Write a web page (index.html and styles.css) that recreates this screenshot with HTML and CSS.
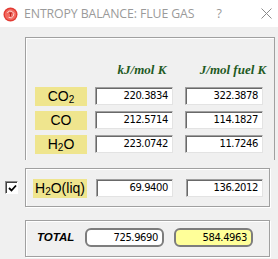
FILE: index.html
```html
<!DOCTYPE html>
<html>
<head>
<meta charset="utf-8">
<link rel="stylesheet" href="styles.css">
</head>
<body>
<div class="titlebar">
  <svg class="appicon" width="15" height="15" viewBox="0 0 15 15">
    <circle cx="7.5" cy="7.5" r="7" fill="#e23b33"/>
    <circle cx="7.5" cy="7.5" r="5.6" fill="#f26a60"/>
    <path d="M4.3 6 A3.4 3.4 0 1 1 5.6 10.3" fill="none" stroke="#fcd6d2" stroke-width="1"/>
    <path d="M6 6 h3 M7.5 6 v3.5" stroke="#b8231c" stroke-width="1"/>
  </svg>
  <span class="title">ENTROPY BALANCE: FLUE GAS</span>
  <span class="help">?</span>
  <svg class="close" width="11" height="11" viewBox="0 0 11 11">
    <path d="M0.5 0.5 L10.5 10.5 M10.5 0.5 L0.5 10.5" stroke="#8a8a8a" stroke-width="1"/>
  </svg>
</div>
<div class="content">
  <div class="group g1">
    <div class="hdr">
      <span class="hcell h1">kJ/mol K</span>
      <span class="hcell h2">J/mol fuel K</span>
    </div>
    <div class="row">
      <span class="lbl">CO<sub>2</sub></span>
      <span class="tb">220.3834</span>
      <span class="tb tb2">322.3878</span>
    </div>
    <div class="row">
      <span class="lbl">CO</span>
      <span class="tb">212.5714</span>
      <span class="tb tb2">114.1827</span>
    </div>
    <div class="row">
      <span class="lbl">H<sub>2</sub>O</span>
      <span class="tb">223.0742</span>
      <span class="tb tb2">11.7246</span>
    </div>
  </div>
  <div class="liqrow">
    <span class="chk">
      <svg width="9" height="9" viewBox="0 0 9 9">
        <path d="M1 4 L3.5 6.5 L8 1.5" fill="none" stroke="#000" stroke-width="1.8"/>
      </svg>
    </span>
    <div class="group g2">
      <span class="lbl lbl2">H<sub>2</sub>O(liq)</span>
      <span class="tb tbl">69.9400</span>
      <span class="tb tbl2">136.2012</span>
    </div>
  </div>
  <div class="group g3">
    <span class="total">TOTAL</span>
    <span class="pill">725.9690</span>
    <span class="pill yellow">584.4963</span>
  </div>
</div>
</body>
</html>
```

FILE: styles.css
```css
html, body {
  margin: 0;
  padding: 0;
}
body {
  width: 278px;
  height: 259px;
  overflow: hidden;
  background: #f0f0f0;
  font-family: "Liberation Sans", Arial, sans-serif;
}
.titlebar {
  height: 27px;
  background: #ffffff;
  display: flex;
  align-items: center;
  box-sizing: border-box;
}
.appicon {
  margin-left: 3px;
  margin-top: 1px;
}
.title {
  margin-left: 6px;
  font-family: "Open Sans", sans-serif;
  font-size: 12.3px;
  color: #9a9a9a;
  letter-spacing: -0.1px;
}
.help {
  margin-left: 22px;
  font-family: "Open Sans", sans-serif;
  font-size: 12.5px;
  color: #9a9a9a;
}
.close {
  margin-left: 39px;
}
.content {
  display: flex;
  flex-direction: column;
}
.group {
  box-sizing: border-box;
  border: 1px solid #a0a0a0;
  box-shadow: inset 1px 1px 0 #ffffff, 1px 1px 0 #ffffff;
}
.g1 {
  margin: 10px 0 0 25px;
  width: 250px;
  height: 123px;
  border-bottom: none;
  padding-left: 9px;
  box-shadow: inset 1px 1px 0 #ffffff;
}
.hdr {
  height: 49px;
  display: flex;
  align-items: center;
  padding-top: 14px;
  box-sizing: border-box;
}
.hcell {
  font-family: "Liberation Serif", "Times New Roman", serif;
  font-weight: bold;
  font-style: italic;
  font-size: 13px;
  color: #1f5a1f;
  text-align: center;
}
.h1 {
  margin-left: 62px;
  width: 78px;
  padding-left: 6px;
}
.h2 {
  margin-left: 9px;
  width: 78px;
  padding-left: 4px;
}
.row {
  display: flex;
  align-items: center;
  height: 18px;
  margin-bottom: 6px;
}
.lbl {
  width: 52px;
  height: 19px;
  background: #efe58e;
  font-size: 14px;
  line-height: 19px;
  text-align: center;
  color: #000;
}
.lbl sub {
  font-size: 10px;
  vertical-align: -2px;
  line-height: 0;
}
.tb {
  box-sizing: border-box;
  width: 78px;
  height: 18px;
  background: #ffffff;
  border-top: 1px solid #a0a0a0;
  border-left: 1px solid #a0a0a0;
  border-right: 1px solid #e3e3e3;
  border-bottom: 1px solid #e3e3e3;
  box-shadow: inset 1px 1px 0 #696969;
  font-family: "DejaVu Sans", Verdana, sans-serif;
  font-size: 10px;
  letter-spacing: -0.4px;
  line-height: 16px;
  text-align: right;
  padding-right: 4px;
  color: #000;
  margin-left: 8px;
}
.tb2 {
  margin-left: 12px;
}
.liqrow {
  display: flex;
  align-items: flex-start;
  margin-top: 8px;
}
.chk {
  box-sizing: border-box;
  width: 13px;
  height: 13px;
  margin: 13px 7px 0 5px;
  background: #fff;
  border-top: 1px solid #8a8a8a;
  border-left: 1px solid #8a8a8a;
  border-right: 1px solid #ffffff;
  border-bottom: 1px solid #ffffff;
  box-shadow: inset 1px 1px 0 #404040;
  display: flex;
  align-items: center;
  justify-content: center;
  padding: 1px 0 0 1px;
}
.chk svg {
  display: block;
}
.g2 {
  width: 245px;
  height: 39px;
  display: flex;
  align-items: flex-start;
  padding: 10px 0 0 7px;
}
.lbl2 {
  width: 54px;
  height: 19px;
}
.tbl {
  margin-left: 9px;
  width: 77px;
}
.tbl2 {
  margin-left: 13px;
  width: 77px;
}
.g3 {
  margin: 13px 0 0 25px;
  width: 245px;
  height: 37px;
  display: flex;
  align-items: flex-start;
  padding: 7px 0 0 11px;
}
.total {
  font-family: "Liberation Sans", Arial, sans-serif;
  font-weight: bold;
  font-style: italic;
  font-size: 11.5px;
  width: 48px;
  margin-top: 2px;
  line-height: 14px;
  color: #000;
}
.pill {
  box-sizing: border-box;
  width: 79px;
  height: 19px;
  border: 2px solid #7d7d7d;
  border-radius: 6px;
  background: #ffffff;
  font-family: "DejaVu Sans", Verdana, sans-serif;
  font-size: 10px;
  letter-spacing: -0.4px;
  line-height: 15px;
  text-align: right;
  padding-right: 4px;
  color: #000;
}
.pill.yellow {
  margin-left: 10px;
  background: #ffff99;
}
```
